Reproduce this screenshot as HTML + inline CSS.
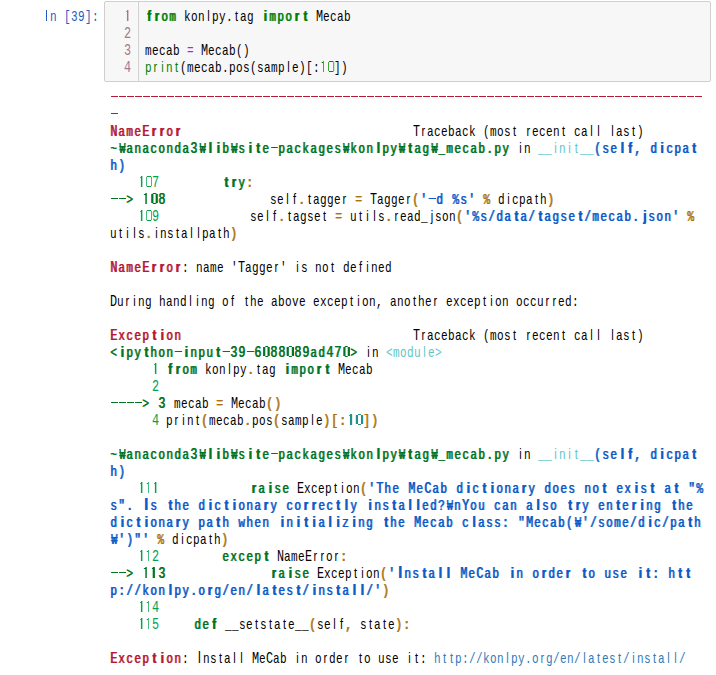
<!DOCTYPE html>
<html><head><meta charset="utf-8"><style>
html,body{margin:0;padding:0;background:#fff;width:716px;height:675px;overflow:hidden;}
body{position:relative;font-family:"Liberation Mono",monospace;font-size:15.0px;line-height:17px;}
.row{position:absolute;left:110px;white-space:pre;height:17px;transform:scaleX(0.73600);transform-origin:0 0;}
.r{letter-spacing:0.5109px;font-weight:normal;}
.b{font-weight:normal;letter-spacing:1.8696px;text-shadow:1.0190px 0 0 currentColor;}
.ln{color:#a57a8c;}
.nr0{font-family:"Liberation Sans",sans-serif;font-weight:normal;font-size:15.0px;line-height:0;letter-spacing:0;margin-left:3.0928px;margin-right:3.0855px;}
.nb0{font-family:"Liberation Sans",sans-serif;font-weight:bold;font-size:15.0px;line-height:0;letter-spacing:0;margin-left:3.3584px;margin-right:3.3437px;}
.nr1{font-family:"Liberation Sans",sans-serif;font-weight:normal;font-size:15.0px;line-height:0;letter-spacing:0;margin-left:3.0855px;margin-right:3.0928px;}
.nb1{font-family:"Liberation Sans",sans-serif;font-weight:bold;font-size:15.0px;line-height:0;letter-spacing:0;margin-left:3.3584px;margin-right:3.3437px;}
.nr2{font-family:"Liberation Sans",sans-serif;font-weight:normal;font-size:16px;line-height:0;letter-spacing:0;margin-left:2.5328px;margin-right:2.5328px;}
.nb2{font-family:"Liberation Sans",sans-serif;font-weight:bold;font-size:16px;line-height:0;letter-spacing:0;margin-left:3.2121px;margin-right:3.2121px;}
.nr3{font-family:"Liberation Sans",sans-serif;font-weight:normal;font-size:15.0px;line-height:0;letter-spacing:0;margin-left:3.7777px;margin-right:2.4007px;}
.nb3{font-family:"Liberation Sans",sans-serif;font-weight:bold;font-size:15.0px;line-height:0;letter-spacing:0;margin-left:3.9956px;margin-right:2.7065px;}
.nr4{font-family:"Liberation Sans",sans-serif;font-weight:normal;font-size:15.0px;line-height:0;letter-spacing:0;margin-left:1.8843px;margin-right:2.6314px;}
.nb4{font-family:"Liberation Sans",sans-serif;font-weight:bold;font-size:15.0px;line-height:0;letter-spacing:0;margin-left:2.1352px;margin-right:2.8969px;}
.nr5{font-family:"Liberation Sans",sans-serif;font-weight:normal;font-size:15.0px;line-height:0;letter-spacing:0;margin-left:2.5545px;margin-right:2.7889px;}
.nb5{font-family:"Liberation Sans",sans-serif;font-weight:bold;font-size:15.0px;line-height:0;letter-spacing:0;margin-left:2.7944px;margin-right:3.0800px;}
.nr6{font-family:"Liberation Sans",sans-serif;font-weight:normal;font-size:15.0px;line-height:0;letter-spacing:0;margin-left:2.6131px;margin-right:2.7303px;}
.nb6{font-family:"Liberation Sans",sans-serif;font-weight:bold;font-size:15.0px;line-height:0;letter-spacing:0;margin-left:2.9372px;margin-right:2.9372px;}
.oner{display:inline-block;position:relative;vertical-align:baseline;height:0;width:9.5109px;}
.oner::before{content:"";position:absolute;left:4.0761px;bottom:0;width:1.4946px;height:11px;background:currentColor;}
.oner::after{content:"";position:absolute;left:2.7174px;bottom:9px;width:1.4946px;height:1px;background:currentColor;}
.oneb{display:inline-block;position:relative;vertical-align:baseline;height:0;width:10.8696px;}
.oneb::before{content:"";position:absolute;left:4.0761px;bottom:0;width:2.8533px;height:11px;background:currentColor;}
.oneb::after{content:"";position:absolute;left:2.7174px;bottom:9px;width:2.8533px;height:1px;background:currentColor;}
.wr{display:inline-block;line-height:0;width:9.5109px;text-align:center;letter-spacing:0;transform:scaleX(0.88);}
.wb{display:inline-block;line-height:0;width:10.8696px;text-align:center;letter-spacing:0;transform:scaleX(0.88);}
.ur{font-size:16.0px;line-height:0;letter-spacing:-0.0891px;}
.ub{font-size:16.0px;line-height:0;letter-spacing:1.2696px;}
.dhr{display:inline-block;position:relative;vertical-align:baseline;height:0;width:9.5109px;}
.dhr::before{content:"";position:absolute;left:1.3587px;bottom:5px;width:8.1522px;height:1px;background:currentColor;}
.dhb{display:inline-block;position:relative;vertical-align:baseline;height:0;width:10.8696px;}
.dhb::before{content:"";position:absolute;left:1.3587px;bottom:5px;width:9.5109px;height:1px;background:currentColor;}
.zrr{display:inline-block;position:relative;vertical-align:baseline;height:0;width:9.5109px;}
.zrr::before{content:"";box-sizing:border-box;position:absolute;left:1.3587px;bottom:1px;width:8.2880px;height:9px;border-left:1.7663px solid currentColor;border-right:1.7663px solid currentColor;}
.zrr::after{content:"";box-sizing:border-box;position:absolute;left:2.7174px;bottom:0;width:5.5707px;height:11px;border-top:1px solid currentColor;border-bottom:1px solid currentColor;}
.zrb{display:inline-block;position:relative;vertical-align:baseline;height:0;width:10.8696px;}
.zrb::before{content:"";box-sizing:border-box;position:absolute;left:1.3587px;bottom:1px;width:9.6467px;height:9px;border-left:3.1250px solid currentColor;border-right:3.1250px solid currentColor;}
.zrb::after{content:"";box-sizing:border-box;position:absolute;left:4.0761px;bottom:0;width:4.2120px;height:11px;border-top:1px solid currentColor;border-bottom:1px solid currentColor;}
.dash{position:absolute;left:111px;height:1px;}
#box{position:absolute;left:104px;top:1px;width:605px;height:79px;border:1px solid #cfcfcf;border-radius:2px;background:#f7f7f7;}
#gut{position:absolute;left:138px;top:2px;width:1px;height:79px;background:#d0d0d0;}
#gutd{position:absolute;left:137px;top:2px;width:1px;height:79px;background:repeating-linear-gradient(180deg,#fff 0 1px,#f7f7f7 1px 2px);}
#prompt{position:absolute;left:43px;top:9px;color:#285abe;}
</style></head><body>
<div id="box"></div><div id="gut"></div><div id="gutd"></div>
<div class="row r" id="prompt"> n [39]:</div><div style="position:absolute;left:46px;top:10px;width:1px;height:11px;background:#285abe"></div>
<div class="row" style="top:9px;left:145px"><span class="b" style="color:#008000"><span class="nb5">f</span><span class="nb4">r</span>om</span><span class="r" style="color:#000"> kon<span class="nr1">l</span>py.<span class="nr6">t</span>ag </span><span class="b" style="color:#008000"><span class="nb0">i</span>mpo<span class="nb4">r</span><span class="nb6">t</span></span><span class="r" style="color:#000"> <span class="ur">M</span>ecab</span></div>
<div class="row ln" style="top:9px;left:124px"><span class="r" style="color:#a57a8c"><span class="oner"></span></span></div>
<div class="row" style="top:26px;left:145px"></div>
<div class="row ln" style="top:26px;left:124px"><span class="r" style="color:#a57a8c"><span class="ur">2</span></span></div>
<div class="row" style="top:43px;left:145px"><span class="r" style="color:#000">mecab </span><span class="r" style="color:#aa22ff">=</span><span class="r" style="color:#000"> <span class="ur">M</span>ecab()</span></div>
<div class="row ln" style="top:43px;left:124px"><span class="r" style="color:#a57a8c"><span class="ur">3</span></span></div>
<div class="row" style="top:60px;left:145px"><span class="r" style="color:#008000">p<span class="nr4">r</span><span class="nr0">i</span>n<span class="nr6">t</span></span><span class="r" style="color:#000">(mecab.pos(samp<span class="nr1">l</span>e)[:</span><span class="r" style="color:#008800"><span class="oner"></span><span class="zrr"></span></span><span class="r" style="color:#000">])</span></div>
<div class="row ln" style="top:60px;left:124px"><span class="r" style="color:#a57a8c"><span class="ur">4</span></span></div>
<div class="row" style="top:124px"><span class="b" style="color:#b41a36"><span class="ub">N</span>ame<span class="ub">E</span><span class="nb4">r</span><span class="nb4">r</span>o<span class="nb4">r</span></span><span class="r" style="color:#000000">                                 <span class="ur">T</span><span class="nr4">r</span>aceback (mos<span class="nr6">t</span> <span class="nr4">r</span>ecen<span class="nr6">t</span> ca<span class="nr1">l</span><span class="nr1">l</span> <span class="nr1">l</span>as<span class="nr6">t</span>)</span></div>
<div class="row" style="top:141px"><span class="b" style="color:#007427">~<span class="wb">₩</span>anaconda<span class="ub">3</span><span class="wb">₩</span><span class="nb1">l</span><span class="nb0">i</span>b<span class="wb">₩</span>s<span class="nb0">i</span><span class="nb6">t</span>e<span class="dhb"></span>packages<span class="wb">₩</span>kon<span class="nb1">l</span>py<span class="wb">₩</span><span class="nb6">t</span>ag<span class="wb">₩</span>_mecab.py</span><span class="r" style="color:#000000"> <span class="nr0">i</span>n </span><span class="r" style="color:#60c6c8">__<span class="nr0">i</span>n<span class="nr0">i</span><span class="nr6">t</span>__</span><span class="b" style="color:#0d5cc6">(se<span class="nb1">l</span><span class="nb5">f</span>, d<span class="nb0">i</span>cpa<span class="nb6">t</span></span></div>
<div class="row" style="top:158px"><span class="b" style="color:#0d5cc6">h)</span></div>
<div class="row" style="top:175px"><span class="r" style="color:#00a250">    <span class="oner"></span><span class="zrr"></span><span class="ur">7</span></span><span class="r" style="color:#000000">         </span><span class="b" style="color:#007427"><span class="nb6">t</span><span class="nb4">r</span>y</span><span class="b" style="color:#aa720e">:</span></div>
<div class="row" style="top:192px"><span class="b" style="color:#007427">  &gt; <span class="oneb"></span><span class="zrb"></span><span class="ub">8</span>             </span><span class="r" style="color:#000000">se<span class="nr1">l</span><span class="nr5">f</span></span><span class="b" style="color:#aa720e">.</span><span class="r" style="color:#000000"><span class="nr6">t</span>agge<span class="nr4">r</span> </span><span class="b" style="color:#aa720e">=</span><span class="r" style="color:#000000"> <span class="ur">T</span>agge<span class="nr4">r</span></span><span class="b" style="color:#aa720e">(</span><span class="b" style="color:#0d5cc6">'<span class="dhb"></span>d %s'</span><span class="r" style="color:#000000"> </span><span class="b" style="color:#aa720e">%</span><span class="r" style="color:#000000"> d<span class="nr0">i</span>cpa<span class="nr6">t</span>h</span><span class="b" style="color:#aa720e">)</span></div>
<div class="row" style="top:209px"><span class="r" style="color:#00a250">    <span class="oner"></span><span class="zrr"></span><span class="ur">9</span></span><span class="r" style="color:#000000">             se<span class="nr1">l</span><span class="nr5">f</span></span><span class="b" style="color:#aa720e">.</span><span class="r" style="color:#000000"><span class="nr6">t</span>agse<span class="nr6">t</span> </span><span class="b" style="color:#aa720e">=</span><span class="r" style="color:#000000"> u<span class="nr6">t</span><span class="nr0">i</span><span class="nr1">l</span>s</span><span class="b" style="color:#aa720e">.</span><span class="r" style="color:#000000"><span class="nr4">r</span>ead_<span class="nr3">j</span>son</span><span class="b" style="color:#aa720e">(</span><span class="b" style="color:#0d5cc6">'%s/da<span class="nb6">t</span>a/<span class="nb6">t</span>agse<span class="nb6">t</span>/mecab.<span class="nb3">j</span>son'</span><span class="r" style="color:#000000"> </span><span class="b" style="color:#aa720e">%</span></div>
<div class="row" style="top:226px"><span class="r" style="color:#000000">u<span class="nr6">t</span><span class="nr0">i</span><span class="nr1">l</span>s</span><span class="b" style="color:#aa720e">.</span><span class="r" style="color:#000000"><span class="nr0">i</span>ns<span class="nr6">t</span>a<span class="nr1">l</span><span class="nr1">l</span>pa<span class="nr6">t</span>h</span><span class="b" style="color:#aa720e">)</span></div>
<div class="row" style="top:260px"><span class="b" style="color:#b41a36"><span class="ub">N</span>ame<span class="ub">E</span><span class="nb4">r</span><span class="nb4">r</span>o<span class="nb4">r</span></span><span class="r" style="color:#000000">: name '<span class="ur">T</span>agge<span class="nr4">r</span>' <span class="nr0">i</span>s no<span class="nr6">t</span> de<span class="nr5">f</span><span class="nr0">i</span>ned</span></div>
<div class="row" style="top:294px"><span class="r" style="color:#000000"><span class="ur">D</span>u<span class="nr4">r</span><span class="nr0">i</span>ng hand<span class="nr1">l</span><span class="nr0">i</span>ng o<span class="nr5">f</span> <span class="nr6">t</span>he above excep<span class="nr6">t</span><span class="nr0">i</span>on, ano<span class="nr6">t</span>he<span class="nr4">r</span> excep<span class="nr6">t</span><span class="nr0">i</span>on occu<span class="nr4">r</span><span class="nr4">r</span>ed:</span></div>
<div class="row" style="top:328px"><span class="b" style="color:#b41a36"><span class="ub">E</span>xcep<span class="nb6">t</span><span class="nb0">i</span>on</span><span class="r" style="color:#000000">                                 <span class="ur">T</span><span class="nr4">r</span>aceback (mos<span class="nr6">t</span> <span class="nr4">r</span>ecen<span class="nr6">t</span> ca<span class="nr1">l</span><span class="nr1">l</span> <span class="nr1">l</span>as<span class="nr6">t</span>)</span></div>
<div class="row" style="top:345px"><span class="b" style="color:#007427">&lt;<span class="nb0">i</span>py<span class="nb6">t</span>hon<span class="dhb"></span><span class="nb0">i</span>npu<span class="nb6">t</span><span class="dhb"></span><span class="ub">3</span><span class="ub">9</span><span class="dhb"></span><span class="ub">6</span><span class="zrb"></span><span class="ub">8</span><span class="ub">8</span><span class="zrb"></span><span class="ub">8</span><span class="ub">9</span>ad<span class="ub">4</span><span class="ub">7</span><span class="zrb"></span>&gt;</span><span class="r" style="color:#000000"> <span class="nr0">i</span>n </span><span class="r" style="color:#60c6c8">&lt;modu<span class="nr1">l</span>e&gt;</span></div>
<div class="row" style="top:362px"><span class="r" style="color:#00a250">      <span class="oner"></span></span><span class="r" style="color:#000000"> </span><span class="b" style="color:#007427"><span class="nb5">f</span><span class="nb4">r</span>om</span><span class="r" style="color:#000000"> kon<span class="nr1">l</span>py</span><span class="b" style="color:#aa720e">.</span><span class="r" style="color:#000000"><span class="nr6">t</span>ag </span><span class="b" style="color:#007427"><span class="nb0">i</span>mpo<span class="nb4">r</span><span class="nb6">t</span></span><span class="r" style="color:#000000"> <span class="ur">M</span>ecab</span></div>
<div class="row" style="top:379px"><span class="r" style="color:#00a250">      <span class="ur">2</span></span></div>
<div class="row" style="top:396px"><span class="b" style="color:#007427">    &gt; <span class="ub">3</span> </span><span class="r" style="color:#000000">mecab </span><span class="b" style="color:#aa720e">=</span><span class="r" style="color:#000000"> <span class="ur">M</span>ecab</span><span class="b" style="color:#aa720e">()</span></div>
<div class="row" style="top:413px"><span class="r" style="color:#00a250">      <span class="ur">4</span></span><span class="r" style="color:#000000"> p<span class="nr4">r</span><span class="nr0">i</span>n<span class="nr6">t</span></span><span class="b" style="color:#aa720e">(</span><span class="r" style="color:#000000">mecab</span><span class="b" style="color:#aa720e">.</span><span class="r" style="color:#000000">pos</span><span class="b" style="color:#aa720e">(</span><span class="r" style="color:#000000">samp<span class="nr1">l</span>e</span><span class="b" style="color:#aa720e">)[:</span><span class="b" style="color:#258f8f"><span class="oneb"></span><span class="zrb"></span></span><span class="b" style="color:#aa720e">])</span></div>
<div class="row" style="top:447px"><span class="b" style="color:#007427">~<span class="wb">₩</span>anaconda<span class="ub">3</span><span class="wb">₩</span><span class="nb1">l</span><span class="nb0">i</span>b<span class="wb">₩</span>s<span class="nb0">i</span><span class="nb6">t</span>e<span class="dhb"></span>packages<span class="wb">₩</span>kon<span class="nb1">l</span>py<span class="wb">₩</span><span class="nb6">t</span>ag<span class="wb">₩</span>_mecab.py</span><span class="r" style="color:#000000"> <span class="nr0">i</span>n </span><span class="r" style="color:#60c6c8">__<span class="nr0">i</span>n<span class="nr0">i</span><span class="nr6">t</span>__</span><span class="b" style="color:#0d5cc6">(se<span class="nb1">l</span><span class="nb5">f</span>, d<span class="nb0">i</span>cpa<span class="nb6">t</span></span></div>
<div class="row" style="top:464px"><span class="b" style="color:#0d5cc6">h)</span></div>
<div class="row" style="top:481px"><span class="r" style="color:#00a250">    <span class="oner"></span><span class="oner"></span><span class="oner"></span></span><span class="r" style="color:#000000">             </span><span class="b" style="color:#007427"><span class="nb4">r</span>a<span class="nb0">i</span>se</span><span class="r" style="color:#000000"> <span class="ur">E</span>xcep<span class="nr6">t</span><span class="nr0">i</span>on</span><span class="b" style="color:#aa720e">(</span><span class="b" style="color:#0d5cc6">'<span class="ub">T</span>he <span class="ub">M</span>e<span class="ub">C</span>ab d<span class="nb0">i</span>c<span class="nb6">t</span><span class="nb0">i</span>ona<span class="nb4">r</span>y does no<span class="nb6">t</span> ex<span class="nb0">i</span>s<span class="nb6">t</span> a<span class="nb6">t</span> "%</span></div>
<div class="row" style="top:498px"><span class="b" style="color:#0d5cc6">s". <span class="nb2">I</span>s <span class="nb6">t</span>he d<span class="nb0">i</span>c<span class="nb6">t</span><span class="nb0">i</span>ona<span class="nb4">r</span>y co<span class="nb4">r</span><span class="nb4">r</span>ec<span class="nb6">t</span><span class="nb1">l</span>y <span class="nb0">i</span>ns<span class="nb6">t</span>a<span class="nb1">l</span><span class="nb1">l</span>ed?<span class="wb">₩</span>n<span class="ub">Y</span>ou can a<span class="nb1">l</span>so <span class="nb6">t</span><span class="nb4">r</span>y en<span class="nb6">t</span>e<span class="nb4">r</span><span class="nb0">i</span>ng <span class="nb6">t</span>he</span></div>
<div class="row" style="top:515px"><span class="b" style="color:#0d5cc6">d<span class="nb0">i</span>c<span class="nb6">t</span><span class="nb0">i</span>ona<span class="nb4">r</span>y pa<span class="nb6">t</span>h when <span class="nb0">i</span>n<span class="nb0">i</span><span class="nb6">t</span><span class="nb0">i</span>a<span class="nb1">l</span><span class="nb0">i</span>z<span class="nb0">i</span>ng <span class="nb6">t</span>he <span class="ub">M</span>ecab c<span class="nb1">l</span>ass: "<span class="ub">M</span>ecab(<span class="wb">₩</span>'/some/d<span class="nb0">i</span>c/pa<span class="nb6">t</span>h</span></div>
<div class="row" style="top:532px"><span class="b" style="color:#0d5cc6"><span class="wb">₩</span>')"'</span><span class="r" style="color:#000000"> </span><span class="b" style="color:#aa720e">%</span><span class="r" style="color:#000000"> d<span class="nr0">i</span>cpa<span class="nr6">t</span>h</span><span class="b" style="color:#aa720e">)</span></div>
<div class="row" style="top:549px"><span class="r" style="color:#00a250">    <span class="oner"></span><span class="oner"></span><span class="ur">2</span></span><span class="r" style="color:#000000">         </span><span class="b" style="color:#007427">excep<span class="nb6">t</span></span><span class="r" style="color:#000000"> <span class="ur">N</span>ame<span class="ur">E</span><span class="nr4">r</span><span class="nr4">r</span>o<span class="nr4">r</span></span><span class="b" style="color:#aa720e">:</span></div>
<div class="row" style="top:566px"><span class="b" style="color:#007427">  &gt; <span class="oneb"></span><span class="oneb"></span><span class="ub">3</span>             </span><span class="b" style="color:#007427"><span class="nb4">r</span>a<span class="nb0">i</span>se</span><span class="r" style="color:#000000"> <span class="ur">E</span>xcep<span class="nr6">t</span><span class="nr0">i</span>on</span><span class="b" style="color:#aa720e">(</span><span class="b" style="color:#0d5cc6">'<span class="nb2">I</span>ns<span class="nb6">t</span>a<span class="nb1">l</span><span class="nb1">l</span> <span class="ub">M</span>e<span class="ub">C</span>ab <span class="nb0">i</span>n o<span class="nb4">r</span>de<span class="nb4">r</span> <span class="nb6">t</span>o use <span class="nb0">i</span><span class="nb6">t</span>: h<span class="nb6">t</span><span class="nb6">t</span></span></div>
<div class="row" style="top:583px"><span class="b" style="color:#0d5cc6">p://kon<span class="nb1">l</span>py.o<span class="nb4">r</span>g/en/<span class="nb1">l</span>a<span class="nb6">t</span>es<span class="nb6">t</span>/<span class="nb0">i</span>ns<span class="nb6">t</span>a<span class="nb1">l</span><span class="nb1">l</span>/'</span><span class="b" style="color:#aa720e">)</span></div>
<div class="row" style="top:600px"><span class="r" style="color:#00a250">    <span class="oner"></span><span class="oner"></span><span class="ur">4</span></span></div>
<div class="row" style="top:617px"><span class="r" style="color:#00a250">    <span class="oner"></span><span class="oner"></span><span class="ur">5</span></span><span class="r" style="color:#000000">     </span><span class="b" style="color:#007427">de<span class="nb5">f</span></span><span class="r" style="color:#000000"> __se<span class="nr6">t</span>s<span class="nr6">t</span>a<span class="nr6">t</span>e__</span><span class="b" style="color:#aa720e">(</span><span class="r" style="color:#000000">se<span class="nr1">l</span><span class="nr5">f</span></span><span class="b" style="color:#aa720e">,</span><span class="r" style="color:#000000"> s<span class="nr6">t</span>a<span class="nr6">t</span>e</span><span class="b" style="color:#aa720e">):</span></div>
<div class="row" style="top:651px"><span class="b" style="color:#b41a36"><span class="ub">E</span>xcep<span class="nb6">t</span><span class="nb0">i</span>on</span><span class="r" style="color:#000000">: <span class="nr2">I</span>ns<span class="nr6">t</span>a<span class="nr1">l</span><span class="nr1">l</span> <span class="ur">M</span>e<span class="ur">C</span>ab <span class="nr0">i</span>n o<span class="nr4">r</span>de<span class="nr4">r</span> <span class="nr6">t</span>o use <span class="nr0">i</span><span class="nr6">t</span>: </span><span class="r" style="color:#337ab7">h<span class="nr6">t</span><span class="nr6">t</span>p://kon<span class="nr1">l</span>py.o<span class="nr4">r</span>g/en/<span class="nr1">l</span>a<span class="nr6">t</span>es<span class="nr6">t</span>/<span class="nr0">i</span>ns<span class="nr6">t</span>a<span class="nr1">l</span><span class="nr1">l</span>/</span></div>
<div class="dash" style="top:96px;width:592px;background:repeating-linear-gradient(90deg,#b41a36 0 7px,transparent 7px 8px)"></div>
<div class="dash" style="top:113px;width:8px;background:repeating-linear-gradient(90deg,#b41a36 0 7px,transparent 7px 8px)"></div>
<div class="dash" style="top:198px;width:16px;background:repeating-linear-gradient(90deg,#007427 0 7px,transparent 7px 8px)"></div>
<div class="dash" style="top:402px;width:32px;background:repeating-linear-gradient(90deg,#007427 0 7px,transparent 7px 8px)"></div>
<div class="dash" style="top:572px;width:16px;background:repeating-linear-gradient(90deg,#007427 0 7px,transparent 7px 8px)"></div>
</body></html>
